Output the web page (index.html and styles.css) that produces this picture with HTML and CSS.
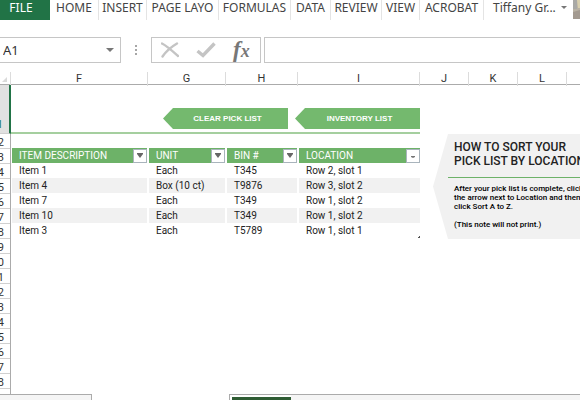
FILE: index.html
```html
<!DOCTYPE html>
<html lang="en">
<head>
    <title>Inventory Pick List</title>
    <meta charset="UTF-8">
    <link rel="stylesheet" href="styles.css">
</head>
<body>
    <nav class="ribbon">
        <a class="tab file" href="#">FILE</a>
        <a class="tab" href="#">HOME</a>
        <a class="tab" href="#">INSERT</a>
        <a class="tab" href="#">PAGE LAYO</a>
        <a class="tab" href="#">FORMULAS</a>
        <a class="tab" href="#">DATA</a>
        <a class="tab" href="#">REVIEW</a>
        <a class="tab" href="#">VIEW</a>
        <a class="tab" href="#">ACROBAT</a>
        <button class="account">
            Tiffany Gr...
            <svg width="6" height="4" viewBox="0 0 6 4"><path d="M0 0h6L3 3z" fill="#777"/></svg>
        </button>
        <svg class="avatar" width="24" height="19" viewBox="0 0 24 19">
            <rect width="24" height="19" fill="#b9b2a4"/>
            <path d="M0 0h4v9H0z" fill="#a9a9a6"/>
            <path d="M4 0h20v8H5z" fill="#d8cfae"/>
            <path d="M0 12l7-2 17 2v7H0z" fill="#a39a90"/>
        </svg>
    </nav>

    <div class="formula-bar">
        <div class="name-box">
            <input class="name-input" type="text" value="A1" aria-label="Name box">
            <button class="name-btn" aria-label="Names">
                <svg width="8" height="4" viewBox="0 0 8 4"><path d="M0 0h8L4 4z" fill="#777"/></svg>
            </button>
        </div>
        <svg class="grip" width="2" height="10" viewBox="0 0 2 10"><path d="M0 0h2v2H0zM0 4h2v2H0zM0 8h2v2H0z" fill="#a6a6a6"/></svg>
        <div class="formula-tools">
            <button class="tool" aria-label="Cancel">
                <svg width="18" height="16" viewBox="0 0 18 16"><path d="M1 1.5C6 4 12 9.500 17 14M16 1.500C10 5 5 9.500 1.500 14.500" fill="none" stroke="#c4c4c4" stroke-width="2.400" stroke-linecap="round"/></svg>
            </button>
            <button class="tool" aria-label="Enter">
                <svg width="20" height="16" viewBox="0 0 20 16"><path d="M1.500 9L7 13.500L18.500 1.500" fill="none" stroke="#c4c4c4" stroke-width="3.400"/></svg>
            </button>
            <button class="tool fx" aria-label="Insert function"><span class="fx-f">f</span><span class="fx-x">x</span></button>
        </div>
        <input class="formula-input" type="text" aria-label="Formula">
    </div>

    <div class="col-heads">
        <span class="corner"><svg width="5" height="5" viewBox="0 0 5 5"><path d="M5 0v5H0z" fill="#dadada"/></svg></span>
        <span>F</span>
        <span>G</span>
        <span>H</span>
        <span>I</span>
        <span>J</span>
        <span>K</span>
        <span>L</span>
        <span></span>
    </div>

    <div class="sheet">
        <div class="row-heads">
            <span class="selected">1</span>
            <span>2</span>
            <span>3</span>
            <span>4</span>
            <span>5</span>
            <span>6</span>
            <span>7</span>
            <span>8</span>
            <span>9</span>
            <span>10</span>
            <span>11</span>
            <span>12</span>
            <span>13</span>
            <span>14</span>
            <span>15</span>
            <span>16</span>
            <span>17</span>
            <span>18</span>
            <span></span>
        </div>

        <main class="cells">
            <div class="banner">
                <a class="arrow-link" href="#">CLEAR PICK LIST</a>
                <a class="arrow-link" href="#">INVENTORY LIST</a>
            </div>

            <table class="pick-list">
                <colgroup>
                    <col class="col-item">
                    <col class="col-unit">
                    <col class="col-bin">
                    <col class="col-location">
                </colgroup>
                <thead>
                    <tr>
                        <th><div class="head">ITEM DESCRIPTION <button class="filter" aria-label="Filter items"><svg width="6" height="5" viewBox="0 0 6 5"><path d="M0 0h6v1L3 5L0 1z" fill="#666"/></svg></button></div></th>
                        <th><div class="head">UNIT <button class="filter" aria-label="Filter units"><svg width="6" height="5" viewBox="0 0 6 5"><path d="M0 0h6v1L3 5L0 1z" fill="#666"/></svg></button></div></th>
                        <th><div class="head">BIN # <button class="filter" aria-label="Filter bins"><svg width="6" height="5" viewBox="0 0 6 5"><path d="M0 0h6v1L3 5L0 1z" fill="#666"/></svg></button></div></th>
                        <th><div class="head">LOCATION <button class="filter" aria-label="Filter locations"><svg width="6" height="5" viewBox="0 0 6 5"><path d="M1 3h4v1L3 5L1 4z" fill="#777"/></svg></button></div></th>
                    </tr>
                </thead>
                <tbody>
                    <tr><td>Item 1</td><td>Each</td><td>T345</td><td>Row 2, slot 1</td></tr>
                    <tr><td>Item 4</td><td>Box (10 ct)</td><td>T9876</td><td>Row 3, slot 2</td></tr>
                    <tr><td>Item 7</td><td>Each</td><td>T349</td><td>Row 1, slot 2</td></tr>
                    <tr><td>Item 10</td><td>Each</td><td>T349</td><td>Row 1, slot 2</td></tr>
                    <tr><td>Item 3</td><td>Each</td><td>T5789</td><td class="last-cell">Row 1, slot 1</td></tr>
                </tbody>
            </table>
        </main>

        <aside class="note">
            <h2>HOW TO SORT YOUR<br>PICK LIST BY LOCATION</h2>
            <p>After your pick list is complete, click<br>the arrow next to Location and then<br>click Sort A to Z.</p>
            <p>(This note will not print.)</p>
        </aside>
    </div>

    <footer class="sheet-tabs">
        <span class="tab-scroll"></span>
        <span class="tab-gap"></span>
        <span class="tab-active"></span>
        <span class="tab-rest"></span>
    </footer>
</body>
</html>
```
FILE: styles.css
```css
* {
    box-sizing: border-box;
}

body {
    margin: 0;
    height: 100vh;
    display: flex;
    flex-direction: column;
    overflow: hidden;
    background: #fff;
    color: #333;
    font-family: Roboto, "Liberation Sans", sans-serif;
    font-size: 10px;
}

button {
    padding: 0;
    border: none;
    background: none;
    color: inherit;
    font: inherit;
}

input {
    min-width: 0;
    padding: 0;
    border: none;
    background: none;
    color: inherit;
    font: inherit;
}

svg {
    display: block;
    flex: none;
}

/* Ribbon */
.ribbon {
    display: grid;
    grid-template-columns: 50px 49px 48px 72px 72px 40px 51px 38px 64px 89px 24px;
    height: 20px;
    font-family: "Noto Sans", sans-serif;
    font-size: 12px;
    line-height: 16px;
    color: #444;
}

.tab {
    border-right: 1px solid #e4e4e4;
    text-align: center;
    text-decoration: none;
    white-space: nowrap;
    color: inherit;
}

.tab.file {
    border-right: none;
    padding-right: 8px;
    background: #217346;
    color: #fff;
}

.account {
    display: flex;
    justify-content: space-between;
    align-items: center;
    height: 16px;
    padding: 0 6px 0 9px;
    line-height: 16px;
    white-space: nowrap;
}

/* Formula bar */
.formula-bar {
    display: flex;
    height: 26px;
    margin-top: 17px;
    font-family: "Noto Sans", sans-serif;
    font-size: 13px;
}

.name-box {
    display: flex;
    width: 121px;
    padding: 0 6px 0 3px;
    border: 1px solid #c6c6c6;
    border-left: none;
}

.name-input {
    flex: 1;
}

.grip {
    align-self: center;
    margin: 0 14px;
}

.formula-tools {
    display: flex;
    align-items: center;
    gap: 17px;
    width: 110px;
    padding-left: 9px;
    border: 1px solid #c6c6c6;
}

.fx {
    display: flex;
    align-items: baseline;
    font-family: "Liberation Serif", serif;
    font-style: italic;
    font-weight: bold;
    line-height: 22px;
    color: #777;
}

.fx-f {
    font-size: 23px;
}

.fx-x {
    font-size: 18px;
}

.formula-input {
    flex: 1;
    margin-left: 3px;
    padding: 0 4px;
    border: 1px solid #c6c6c6;
    border-right: none;
}

/* Column and row headings */
.col-heads {
    display: grid;
    grid-template-columns: 11px 137px 78px 72px 122px 49px 49px 49px 1fr;
    height: 13px;
    margin-top: 9px;
    border-bottom: 1px solid #ababab;
    font-size: 11px;
    line-height: 14px;
    text-align: center;
}

.col-heads span {
    border-right: 1px solid #dcdcdc;
}

.col-heads span:last-child {
    border-right: none;
}

.corner {
    display: flex;
    justify-content: flex-end;
    align-items: center;
    padding-right: 3px;
}

.sheet {
    flex: 1;
    display: flex;
    min-height: 0;
    overflow: hidden;
}

.row-heads {
    flex: none;
    width: 11px;
    border-right: 1px solid #ababab;
    font-size: 11px;
}

.row-heads span {
    display: flex;
    justify-content: flex-end;
    height: 15px;
    padding-right: 6px;
    border-bottom: 1px solid #d0d0d0;
    line-height: 17px;
}

.row-heads .selected {
    align-items: flex-end;
    height: 49px;
    margin-right: -1px;
    border-right: 2px solid #217346;
    background: #e1e1e1;
    color: #217346;
}

/* Cells */
.cells {
    flex: none;
    width: 409px;
}

.banner {
    display: flex;
    justify-content: flex-end;
    align-items: flex-end;
    gap: 7px;
    height: 49px;
    padding-bottom: 3px;
    border-bottom: 2px solid #a5cf9f;
}

.arrow-link {
    width: 125px;
    height: 21px;
    padding-left: 4px;
    background: #74b96e;
    clip-path: polygon(0 50%, 10px 0, 100% 0, 100% 100%, 10px 100%);
    color: #fff;
    font-family: "Liberation Sans", sans-serif;
    font-size: 8px;
    font-weight: bold;
    line-height: 21px;
    text-align: center;
    text-decoration: none;
}

.pick-list {
    width: 408px;
    margin: 14px 0 0 1px;
    border-collapse: separate;
    border-spacing: 0;
    table-layout: fixed;
    color: #222;
}

.col-item {
    width: 135px;
}

.col-unit {
    width: 78px;
}

.col-bin {
    width: 72px;
}

.col-location {
    width: 123px;
}

.pick-list th,
.pick-list td {
    height: 15px;
    padding: 0 0 0 7px;
    border-left: 2px solid #fff;
    line-height: 15px;
    text-align: left;
    white-space: nowrap;
}

.pick-list th:first-child,
.pick-list td:first-child {
    border-left: none;
}

.pick-list th {
    background: #6db268;
    color: #fff;
    font-weight: normal;
}

.pick-list tbody tr:nth-child(even) {
    background: #f1f1f1;
}

.head {
    display: flex;
    justify-content: space-between;
    align-items: center;
    height: 15px;
}

.filter {
    display: flex;
    justify-content: center;
    align-items: center;
    width: 14px;
    height: 14px;
    border: 1px solid #a9b4bc;
    background: #fff;
}

/* Resize mark in the table's corner */
.pick-list .last-cell {
    background: linear-gradient(135deg, transparent 50%, #555 50%) right bottom / 3px 3px no-repeat;
}

/* Note */
.note {
    flex: 1 0 160px;
    height: 105px;
    margin: 49px 0 0 13px;
    padding: 6px 0 0 21px;
    background: #f1f1f1;
    clip-path: polygon(0 50%, 15px 0, 100% 0, 100% 100%, 15px 100%);
    color: #222;
    font-size: 8px;
    font-weight: 500;
    line-height: 9px;
    white-space: nowrap;
}

.note h2 {
    margin: 0 0 6px -6px;
    padding: 0 0 9px 6px;
    border-bottom: 1px solid #6db268;
    font-size: 12px;
    font-weight: 500;
    line-height: 14px;
}

.note p {
    margin: 0 0 9px;
    color: #000;
}

/* Sheet tabs */
.sheet-tabs {
    display: flex;
    flex: none;
    height: 6px;
}

.tab-scroll {
    width: 92px;
    border: 1px solid #ababab;
    border-width: 1px 1px 0 0;
    background: #f5f5f5;
}

.tab-gap {
    width: 137px;
}

.tab-active {
    width: 62px;
    border: 1px solid #ababab;
    border-width: 1px 0 0 1px;
    padding: 2px 0 0 2px;
    background: #2f5d34 content-box;
}

.tab-rest {
    flex: 1;
    border-top: 1px solid #ababab;
    background: #f5f5f5;
}
```
